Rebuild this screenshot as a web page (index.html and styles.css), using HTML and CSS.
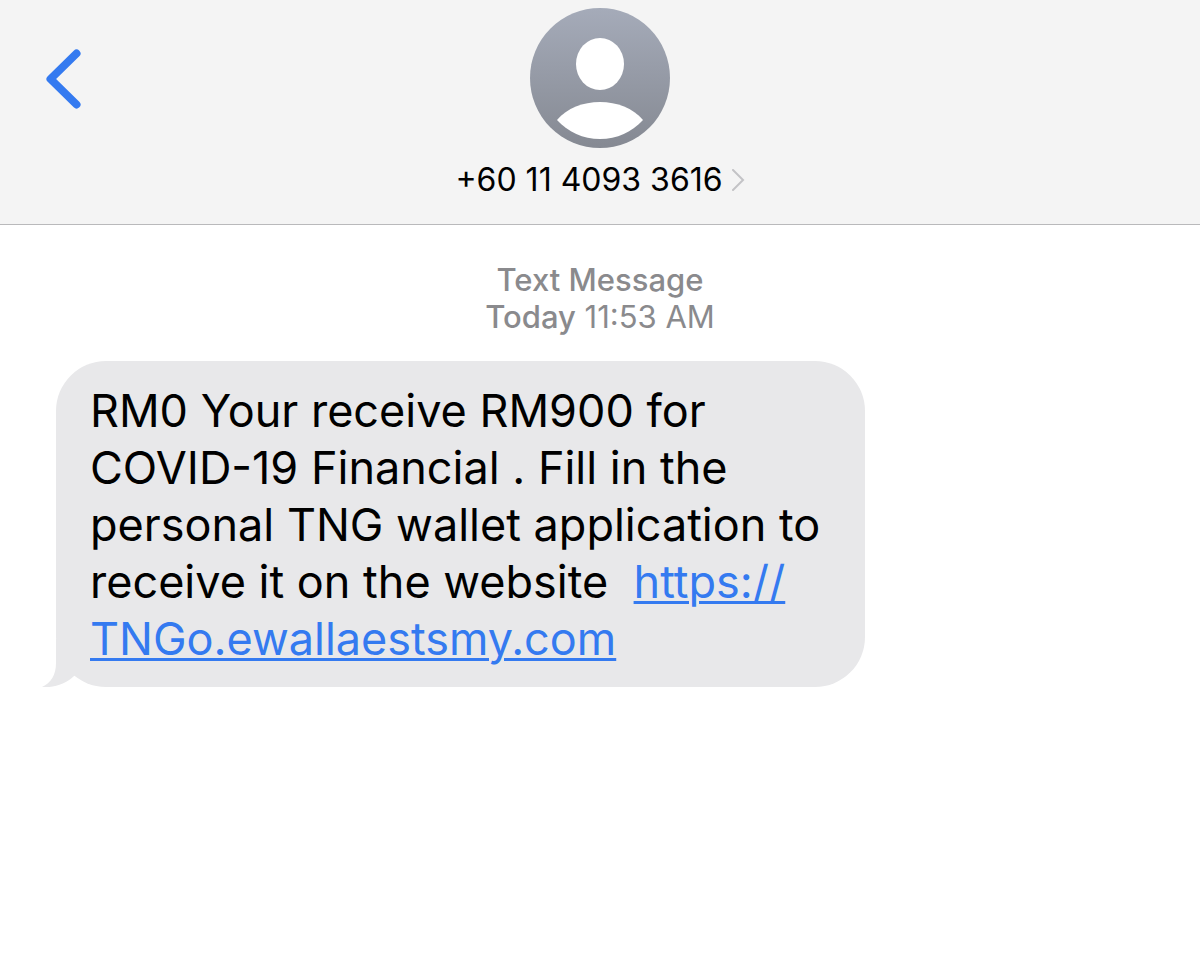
FILE: index.html
```html
<!DOCTYPE html>
<html lang="en">
    <head>
        <meta charset="utf-8">
        <title>Messages</title>
        <link rel="stylesheet" href="styles.css">
    </head>
    <body>
        <header>
            <button class="back" type="button" aria-label="Back">
                <svg width="36" height="60" viewBox="0 0 36 60">
                    <path d="M30.500 4.500L4.500 30L30.500 55.500" />
                </svg>
            </button>
            <a class="contact" href="#contact">
                <svg class="avatar" width="140" height="140" viewBox="0 0 140 140">
                    <defs>
                        <linearGradient id="avatar-fill" x1="0" y1="0" x2="0" y2="1">
                            <stop offset="0" stop-color="#a5abb9" />
                            <stop offset="1" stop-color="#858992" />
                        </linearGradient>
                    </defs>
                    <circle cx="70" cy="70" r="70" fill="url(#avatar-fill)" />
                    <ellipse cx="70" cy="56" rx="24" ry="26" fill="#fff" />
                    <path d="M27 112C37 100 53 94 70 94S103 100 113 112C102 124 87 131 70 131S38 124 27 112Z" fill="#fff" />
                </svg>
                <span class="number">
                    +60 11 4093 3616
                    <svg class="chevron" width="14" height="22" viewBox="0 0 14 22">
                        <path d="M2 1L12 11L2 21" />
                    </svg>
                </span>
            </a>
        </header>
        <main>
            <p class="timestamp">
                <strong>Text Message</strong><br>
                <strong>Today</strong> 11:53 AM
            </p>
            <div class="bubble">
                <p>RM0 Your receive RM900 for COVID-19 Financial . Fill in the personal TNG wallet application to receive it on the website&nbsp; <a href="#link">https://<wbr>TNGo.ewallaestsmy.com</a></p>
                <svg class="tail" width="48" height="48" viewBox="0 0 48 48">
                    <path d="M14 0V24C14 36 9 44 0 48C12 49 24 45 32 37L48 24V0Z" />
                </svg>
            </div>
        </main>
    </body>
</html>
```

FILE: styles.css
```css
body {
    margin: 0;
    background: #fff;
    color: #000;
    font-family: Inter, "Liberation Sans", sans-serif;
}
header {
    display: grid;
    grid-template-columns: 1fr auto 1fr;
    align-items: start;
    padding: 8px 0 24px;
    background: #f4f4f4;
    border-bottom: 1px solid #b9b9bb;
}
.back {
    justify-self: start;
    margin: 41px 0 0 46px;
    padding: 0;
    border: 0;
    background: none;
    line-height: 0;
}
.back path {
    fill: none;
    stroke: #347af0;
    stroke-width: 8;
    stroke-linecap: round;
    stroke-linejoin: round;
}
.contact {
    display: flex;
    flex-direction: column;
    align-items: center;
    gap: 12px;
    color: #000;
    text-decoration: none;
}
.number {
    display: flex;
    align-items: center;
    gap: 8px;
    font-size: 32px;
    line-height: 40px;
}
.chevron path {
    fill: none;
    stroke: #c3c3c6;
    stroke-width: 2;
    stroke-linecap: round;
}
main {
    padding: 36px 56px;
}
.timestamp {
    margin: 0 0 26px;
    color: #8a8a8d;
    font-size: 31px;
    line-height: 37px;
    text-align: center;
}
.timestamp strong {
    font-weight: 500;
}
.bubble {
    position: relative;
    box-sizing: border-box;
    max-width: 809px;
    padding: 21px 34px 20px;
    border-radius: 50px;
    background: #e8e8ea;
}
.bubble p {
    margin: 0;
    font-size: 45px;
    line-height: 57px;
}
.bubble a {
    color: #347af0;
    text-decoration-thickness: 3px;
    text-underline-offset: 3px;
}
.tail {
    position: absolute;
    left: -14px;
    bottom: 0;
    fill: #e8e8ea;
}
```
